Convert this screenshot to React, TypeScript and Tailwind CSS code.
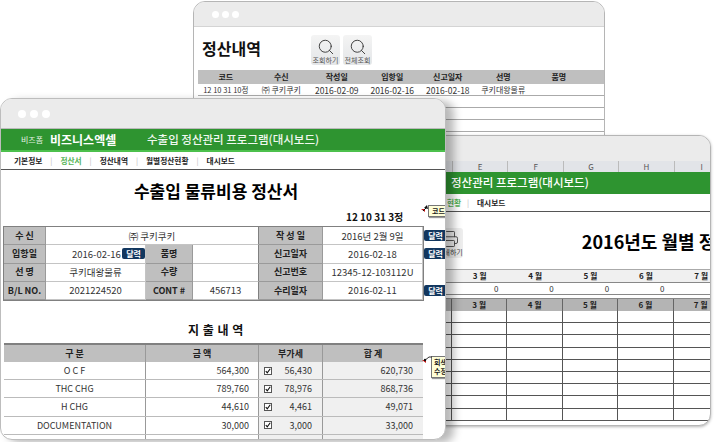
import { Search, Printer } from "lucide-react";

const font = "[font-family:'Noto_Sans_CJK_KR','Noto_Sans',sans-serif]";

function Dots({ small }: { small?: boolean }) {
  const c = small ? "w-[7px] h-[7px] rounded-full bg-white" : "w-2 h-2 rounded-full bg-white";
  return (
    <div className={small ? "flex gap-[3px]" : "flex gap-1"}>
      <span className={c} />
      <span className={c} />
      <span className={c} />
    </div>
  );
}

function ToolButton({ label }: { label: string }) {
  return (
    <div className="w-[29px] h-[30px] rounded-[3px] bg-gradient-to-b from-[#f4f4f4] to-[#e4e6e8] flex flex-col items-center pt-[3px]">
      <Search size={18} strokeWidth={1.2} className="text-[#333]" />
      <span className="text-[7px] leading-[8px] text-[#555] whitespace-nowrap">{label}</span>
    </div>
  );
}

function BackWindow() {
  const heads = ["코드", "수신", "작성일", "입항일", "신고일자", "선명", "품명", ""];
  const row = ["12 10 31 10정", "㈜ 쿠키쿠키", "2016-02-09", "2016-02-16", "2016-02-18", "쿠키대왕물류", "", ""];
  return (
    <div className="absolute left-[193px] top-px w-[412px] h-[140px] bg-white border border-[#b5b5b5] rounded-t-[12px] overflow-hidden">
      <div className="h-[25px] bg-[#ebebeb] border-b border-[#d4d4d4] flex items-center pl-[18px]">
        <Dots small />
      </div>
      <div className="h-[43px] flex pl-[8px] pt-[8px]">
        <div className="w-[109px] text-[16px] leading-[24px] font-bold text-[#111] pt-[1px]">정산내역</div>
        <div className="flex gap-[3px]">
          <ToolButton label="조회하기" />
          <ToolButton label="전체조회" />
        </div>
      </div>
      <div className="pl-[4px]">
        <div className="grid grid-cols-[repeat(7,55.5px)_auto] h-[14px] bg-[#bfbfbf] items-center text-center text-[8px] leading-[14px] font-semibold text-[#222]">
          {heads.map((h, i) => (
            <span key={i}>{h}</span>
          ))}
        </div>
        <div className="grid grid-cols-[repeat(7,55.5px)_auto] h-[12px] border-b border-[#aaa] items-center text-center text-[8px] leading-[12px] text-[#333]">
          {row.map((h, i) => (
            <span key={i} className={i === 0 ? "whitespace-nowrap text-[7.5px]" : i >= 2 && i <= 4 ? "whitespace-nowrap text-[8.5px]" : "whitespace-nowrap"}>{h}</span>
          ))}
        </div>
        <div className="h-[12px] border-b border-[#aaa]" />
        <div className="h-[12px] border-b border-[#aaa]" />
        <div className="h-[12px] border-b border-[#aaa]" />
      </div>
    </div>
  );
}

function RightWindow() {
  const months = ["3 월", "4 월", "5 월", "6 월", "7 월"];
  const cols = "grid grid-cols-[51px_repeat(5,55.4px)]";
  return (
    <div className="absolute left-[400px] top-[135px] w-[311px] h-[291px] bg-white border border-[#b5b5b5] rounded-t-[12px] rounded-b-[12px] overflow-hidden shadow-[0_1px_3px_rgba(0,0,0,0.3)]">
      <div className="h-[25px] bg-[#ebebeb]" />
      <div className={`${cols} h-[11px] bg-[#e2e4e8] text-center text-[8px] leading-[11px] text-[#555]`}>
        <span />
        {["E", "F", "G", "H", "I"].map((l) => (
          <span key={l} className="border-l border-[#bbb]">{l}</span>
        ))}
      </div>
      <div className="h-[22px] bg-[#2e9430] flex items-center pl-[50px] text-[11.5px] font-medium text-white whitespace-nowrap">
        정산관리 프로그램(대시보드)
      </div>
      <div className="h-[18px] border-b border-[#555] flex items-center pl-[46px] text-[7.7px] font-bold whitespace-nowrap">
        <span className="text-[#55b355] w-[20px]">현황</span>
        <span className="text-[#bbb] font-normal w-[10px]">|</span>
        <span className="text-[#222]">대시보드</span>
      </div>
      <div className="h-[57px] flex items-start pt-[16px] pl-[36px]">
        <div className="w-[30px] h-[30px] rounded-[3px] bg-[#eeeeee] flex flex-col items-center pt-[2px]">
          <Printer size={18} strokeWidth={1.2} className="text-[#444]" />
          <span className="text-[7px] leading-[8px] text-[#444] whitespace-nowrap">인쇄하기</span>
        </div>
        <div className="ml-[119px] text-[18px] leading-[26px] font-bold text-black whitespace-nowrap">2016년도 월별 정산</div>
      </div>
      <div className={`${cols} h-[13px] bg-[#f0f0f0] border-t border-[#aaa] text-center text-[8px] leading-[12px] font-bold text-[#222]`}>
        <span />
        {months.map((m) => (
          <span key={m}>{m}</span>
        ))}
      </div>
      <div className={`${cols} h-[12px] border-t border-[#888] text-right text-[8px] leading-[11px] text-[#333]`}>
        <span />
        {[0, 1, 2, 3].map((i) => (
          <span key={i} className="pr-[9px]">0</span>
        ))}
        <span />
      </div>
      <div className="h-[5px] border-t border-b border-[#888] bg-white" />
      <div className={`${cols} h-[12px] bg-[#b4b4b4] text-center text-[8px] leading-[12px] font-bold text-[#222]`}>
        <span className="border-r border-[#666]" />
        {months.map((m) => (
          <span key={m} className="border-r border-[#666]">{m}</span>
        ))}
      </div>
      {Array.from({ length: 9 }).map((_, r) => (
        <div key={r} className={`${cols} h-[12.2px] border-b border-[#555]`}>
          {[0, 1, 2, 3, 4, 5].map((c) => (
            <span key={c} className="border-r border-[#555]" />
          ))}
        </div>
      ))}
    </div>
  );
}

function Badge({ className }: { className: string }) {
  return (
    <span className={`absolute h-[11px] w-[23px] rounded-[2px] bg-[#12375f] text-white text-[8px] leading-[11px] font-bold text-center ${className}`}>
      달력
    </span>
  );
}

function Label({ children }: { children: React.ReactNode }) {
  return (
    <div className="bg-[#bfbfbf] border-b border-r border-[#9a9a9a] flex items-center justify-center text-[9px] font-bold text-[#222] whitespace-pre">
      {children}
    </div>
  );
}

function Val({ children, className = "" }: { children?: React.ReactNode; className?: string }) {
  return (
    <div className={`bg-white border-b border-r border-[#c4c4c4] flex items-center justify-center text-[9.5px] text-[#333] whitespace-nowrap ${className}`}>
      {children}
    </div>
  );
}

function Info() {
  return (
    <div className="relative ml-[2px] w-[421px] grid grid-cols-[42px_100px_47px_66px_64px_100px] auto-rows-[18.25px] border border-[#808080]">
      <Label>수 신</Label>
      <Val className="col-span-3 border-r-[#808080]">㈜ 쿠키쿠키</Val>
      <Label>작 성 일</Label>
      <Val>2016년 2월 9일</Val>

      <Label>입항일</Label>
      <Val className="justify-start pl-[26px] relative">
        2016-02-16
        <Badge className="left-[76px] top-[3px]" />
      </Val>
      <Label>품명</Label>
      <Val className="border-r-[#808080]" />
      <Label>신고일자</Label>
      <Val>2016-02-18</Val>

      <Label>선 명</Label>
      <Val>쿠키대왕물류</Val>
      <Label>수량</Label>
      <Val className="border-r-[#808080]" />
      <Label>신고번호</Label>
      <Val>12345-12-103112U</Val>

      <Label>B/L NO.</Label>
      <Val>2021224520</Val>
      <Label>CONT #</Label>
      <Val className="border-r-[#808080]">456713</Val>
      <Label>수리일자</Label>
      <Val>2016-02-11</Val>
    </div>
  );
}

function Cost() {
  const rows = [
    ["O C F", "564,300", "56,430", "620,730"],
    ["THC CHG", "789,760", "78,976", "868,736"],
    ["H CHG", "44,610", "4,461", "49,071"],
    ["DOCUMENTATION", "30,000", "3,000", "33,000"],
  ];
  const cols = "grid grid-cols-[142px_113px_64px_100px]";
  return (
    <div className="ml-[3px] w-[419px] border-t-2 border-[#808080]">
      <div className={`${cols} h-[17px] bg-[#bfbfbf] text-center text-[9px] leading-[17px] font-bold text-[#222]`}>
        <span className="border-r border-[#999]">구 분</span>
        <span className="border-r border-[#999]">금 액</span>
        <span className="border-r border-[#999]">부가세</span>
        <span>합 계</span>
      </div>
      {rows.map((r) => (
        <div key={r[0]} className={`${cols} h-[18.2px] border-b border-[#bbb] text-[9px] leading-[17px] text-[#333]`}>
          <span className="text-center border-r border-[#999]">{r[0]}</span>
          <span className="text-right pr-[9px] border-r border-[#999]">{r[1]}</span>
          <span className="bg-[#f0f0f0] border-r border-[#999] flex items-center justify-between pl-[5px] pr-[10px]">
            <span className="w-[8px] h-[8px] border border-[#555] bg-white flex items-center justify-center">
              <svg viewBox="0 0 8 8" className="w-[6px] h-[6px]">
                <path d="M1 4 L3 6.5 L7 1" fill="none" stroke="#111" strokeWidth="1.5" />
              </svg>
            </span>
            {r[2]}
          </span>
          <span className="bg-[#f0f0f0] text-right pr-[10px]">{r[3]}</span>
        </div>
      ))}
      <div className={`${cols} h-[18px]`}>
        <span className="border-r border-[#999]" />
        <span className="border-r border-[#999]" />
        <span className="bg-[#f0f0f0] border-r border-[#999]" />
        <span className="bg-[#f0f0f0]" />
      </div>
    </div>
  );
}

function FrontWindow() {
  return (
    <div className="absolute left-0 top-[98px] w-[446px] h-[342px] bg-white border border-[#bdbdbd] rounded-[12px] overflow-hidden shadow-[8px_3px_8px_rgba(0,0,0,0.28)] z-10">
      <div className="h-[30px] bg-[#ebebeb] border-b border-[#bbb] flex items-center pl-[17px]">
        <Dots />
      </div>
      <div className="h-[23px] bg-[#2e9430] border-b-[2px] border-[#4cc04c] flex items-center pl-[20px] text-white whitespace-nowrap">
        <span className="w-[29px] text-[8px] text-[#e4f2e4]">비즈폼</span>
        <span className="w-[97px] text-[12px] font-bold">비즈니스엑셀</span>
        <span className="text-[11.5px] font-medium text-[#f0f8f0]">수출입 정산관리 프로그램(대시보드)</span>
      </div>
      <div className="h-[18px] border-b border-[#555] flex items-center gap-[8px] pl-[13px] text-[7.7px] font-bold text-[#222] whitespace-nowrap">
        <span>기본정보</span>
        <span className="text-[#bbb] font-normal">|</span>
        <span className="text-[#55b355]">정산서</span>
        <span className="text-[#bbb] font-normal">|</span>
        <span>정산내역</span>
        <span className="text-[#bbb] font-normal">|</span>
        <span>월별정산현황</span>
        <span className="text-[#bbb] font-normal">|</span>
        <span>대시보드</span>
      </div>
      <div className="h-[56px] relative">
        <div className="pt-[8px] text-center pr-[14px] text-[17px] leading-[26px] font-bold text-black">수출입 물류비용 정산서</div>
        <div className="absolute left-[345px] top-[40px] text-[10px] leading-[14px] font-bold text-[#111] whitespace-nowrap">12 10 31 3정</div>
      </div>
      <Info />
      <div className="h-[42px] pt-[21px] text-center pr-[14px] text-[12px] leading-[16px] font-bold tracking-[0.5px] text-[#111]">지 출 내 역</div>
      <Cost />

      {/* Overlays: calendar buttons and spreadsheet comments */}
      <Badge className="left-[423px] top-[131px]" />
      <Badge className="left-[423px] top-[149px]" />
      <Badge className="left-[423px] top-[186px]" />
      <span className="absolute left-[427px] top-[106px] w-[20px] h-[12px] bg-[#ffffd8] border border-[#777] shadow-[1px_1px_1px_rgba(0,0,0,0.4)] text-[7px] leading-[10px] font-bold text-[#222] pl-[3px] whitespace-nowrap">코드</span>
      <span className="absolute left-[430px] top-[257px] w-[20px] h-[22px] bg-[#ffffd8] border border-[#777] shadow-[1px_1px_1px_rgba(0,0,0,0.4)] text-[7px] leading-[9px] font-bold text-[#222] pl-[2px] pt-[1px]">
        회색
        <br />
        수정
      </span>
      <svg viewBox="0 0 10 10" className="absolute left-[420px] top-[106px] w-[10px] h-[10px]">
        <path d="M0 4 L4 4 L4 7 Z" fill="#d01010" />
        <path d="M2 6 L6 2" stroke="#111" strokeWidth="1" />
        <path d="M6 0 L7 4 L3 3 Z" fill="#111" />
      </svg>
      <svg viewBox="0 0 10 10" className="absolute left-[421px] top-[257px] w-[10px] h-[10px]">
        <path d="M0 4 L4 4 L4 7 Z" fill="#d01010" />
        <path d="M2 5 L7 1 L10 1" stroke="#333" strokeWidth="1" fill="none" />
        <circle cx="3" cy="4" r="1.2" fill="#111" />
      </svg>
    </div>
  );
}

export default function App() {
  return (
    <div className={`relative w-[714px] h-[442px] bg-white overflow-hidden ${font}`}>
      <BackWindow />
      <RightWindow />
      <FrontWindow />
    </div>
  );
}
